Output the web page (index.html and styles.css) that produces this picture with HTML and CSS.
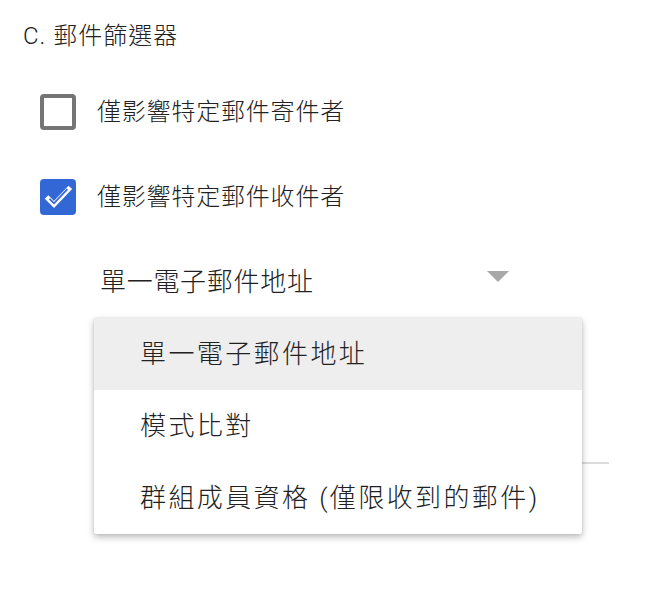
FILE: index.html
```html
<!DOCTYPE html>
<html lang="zh-Hant">
<head>
<meta charset="utf-8">
<title>郵件篩選器</title>
<link rel="stylesheet" href="styles.css">
</head>
<body>
<div class="page">
  <div class="title">C. 郵件篩選器</div>
  <div class="options">
    <div class="row row-first">
      <span class="box"></span>
      <span class="label">僅影響特定郵件寄件者</span>
    </div>
    <div class="row row-second">
      <span class="box checked">
        <svg viewBox="0 0 36 36" width="36" height="36">
          <polyline points="8.3,19.8 14,25.5 28.6,10.2" fill="none" stroke="#fff" stroke-width="5" stroke-linecap="square" stroke-linejoin="miter"/>
          <polyline points="9.5,19.8 14,24.3 27.4,10.2" fill="none" stroke="#3367d6" stroke-width="1.8" stroke-linecap="butt" stroke-linejoin="miter"/>
        </svg>
      </span>
      <span class="label">僅影響特定郵件收件者</span>
    </div>
  </div>
  <div class="select">
    <span class="select-text">單一電子郵件地址</span>
    <span class="arrow"></span>
  </div>
  <div class="field-line"></div>
  <div class="menu">
    <div class="item active">單一電子郵件地址</div>
    <div class="item">模式比對</div>
    <div class="item">群組成員資格 (僅限收到的郵件)</div>
  </div>
</div>
</body>
</html>
```

FILE: styles.css
```css
html, body {
  margin: 0;
  padding: 0;
  background: #ffffff;
}

body {
  font-family: Roboto, "Noto Sans CJK TC", "Noto Sans", sans-serif;
  font-weight: 300;
  color: #212121;
}

.page {
  position: relative;
  width: 671px;
  height: 593px;
  overflow: hidden;
}

.title {
  padding: 20px 0 0 23px;
  height: 32px;
  line-height: 32px;
  font-size: 24px;
  letter-spacing: 1px;
}

.options {
  display: flex;
  flex-direction: column;
  padding: 42px 0 0 40px;
  gap: 49px;
}

.row {
  display: flex;
  align-items: center;
  height: 36px;
  gap: 21px;
}

.box {
  box-sizing: border-box;
  width: 36px;
  height: 36px;
  border: 4px solid #757575;
  border-radius: 4px;
  flex: none;
}

.box.checked {
  border: none;
  background: #3367d6;
}

.box svg {
  display: block;
}

.label {
  font-size: 24px;
  letter-spacing: 0.8px;
  line-height: 36px;
}

.select {
  display: flex;
  align-items: center;
  justify-content: space-between;
  margin: 49px 0 0 100px;
  width: 409px;
  height: 36px;
}

.select-text {
  font-size: 26px;
  letter-spacing: 0.7px;
  line-height: 36px;
}

.arrow {
  width: 0;
  height: 0;
  border-left: 11px solid transparent;
  border-right: 11px solid transparent;
  border-top: 11px solid #a8a8a8;
  margin-top: -11px;
}

.field-line {
  margin: 162px 0 0 100px;
  width: 509px;
  height: 2px;
  background: #dcdcdc;
}

.menu {
  position: absolute;
  left: 94px;
  top: 318px;
  width: 488px;
  background: #ffffff;
  border-radius: 2px;
  box-shadow: 0 3px 7px rgba(0, 0, 0, 0.28), 0 0 2px rgba(0, 0, 0, 0.12);
  display: flex;
  flex-direction: column;
}

.item {
  height: 72px;
  line-height: 72px;
  padding-left: 46px;
  font-size: 26px;
  letter-spacing: 2.4px;
  white-space: nowrap;
}

.item.active {
  background: #eeeeee;
}
```
